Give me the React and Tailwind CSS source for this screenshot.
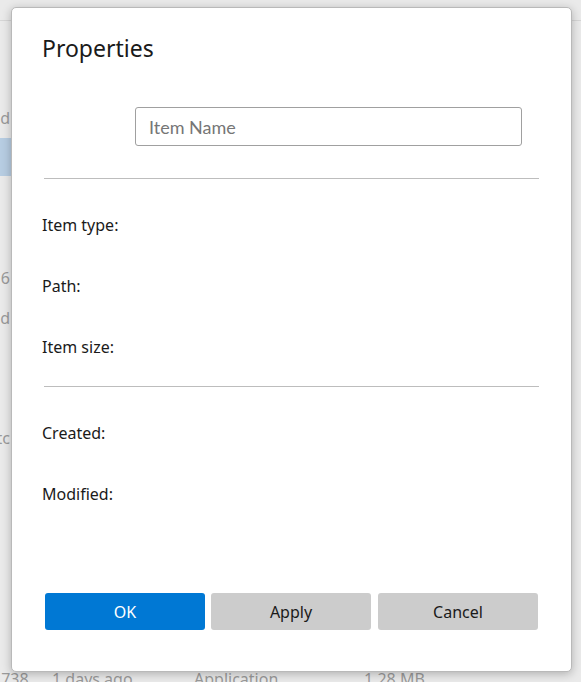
import React from 'react';

const rows = [
  { top: 'top-[106px]', text: 'Shared' },
  { top: 'top-[266px]', text: '2016' },
  { top: 'top-[306px]', text: 'Shared' },
  { top: 'top-[426px]', text: 'etc' },
];

function Field({ label }) {
  return <div className="h-[61px] flex items-center text-[16px] text-[#1a1a1a]">{label}</div>;
}

export default function App() {
  return (
    <div className="relative w-[581px] h-[682px] overflow-hidden bg-[#eaeaea] font-['Noto_Sans',sans-serif]">
      {/* background window, faded behind the dialog */}
      <div className="absolute left-0 right-0 top-[20px] h-px bg-[#d6d6d6]" />
      <div className="absolute left-0 top-[138px] w-[40px] h-[38px] bg-[#b7cde2]" />
      {rows.map((r) => (
        <div key={r.text} className={`absolute right-[571px] ${r.top} text-[16px] text-[#9a9a9a]`}>
          {r.text}
        </div>
      ))}
      <div className="absolute left-0 top-[669px] flex text-[16px] text-[#9a9a9a] leading-[20px]">
        <span className="w-[60px] -ml-[8px]">1738</span>
        <span className="w-[142px]">1 days ago</span>
        <span className="w-[170px]">Application</span>
        <span>1.28 MB</span>
      </div>

      {/* dialog */}
      <div className="absolute left-[11px] top-[7px] w-[561px] h-[665px] bg-white rounded-[5px] border border-[#b9b9b9] shadow-[0_2px_10px_rgba(0,0,0,0.25)] px-[30px] flex flex-col">
        <h1 className="mt-[25px] text-[23px] leading-[30px] text-[#1a1a1a]">Properties</h1>
        <div className="mt-[44px] pl-[93px] pr-[19px]">
          <input
            placeholder="Item Name"
            className="w-full h-[39px] border border-[#a0a0a0] rounded-[3px] px-[13px] text-[18px] font-['Lato',sans-serif] placeholder:text-[#767676] outline-none"
          />
        </div>
        <div className="mt-[32px] mx-[2px] h-px bg-[#bdbdbd]" />
        <div className="mt-[15px]">
          <Field label="Item type:" />
          <Field label="Path:" />
          <Field label="Item size:" />
        </div>
        <div className="mt-[9px] mx-[2px] h-px bg-[#bdbdbd]" />
        <div className="mt-[15px]">
          <Field label="Created:" />
          <Field label="Modified:" />
        </div>
        <div className="mt-auto mb-[41px] ml-[3px] flex gap-[6px]">
          <button className="w-[160px] h-[37px] rounded-[3px] bg-[#0078d4] text-white text-[16px]">OK</button>
          <button className="w-[160px] h-[37px] rounded-[3px] bg-[#cccccc] text-[#1a1a1a] text-[16px]">Apply</button>
          <button className="ml-px w-[160px] h-[37px] rounded-[3px] bg-[#cccccc] text-[#1a1a1a] text-[16px]">Cancel</button>
        </div>
      </div>
    </div>
  );
}
